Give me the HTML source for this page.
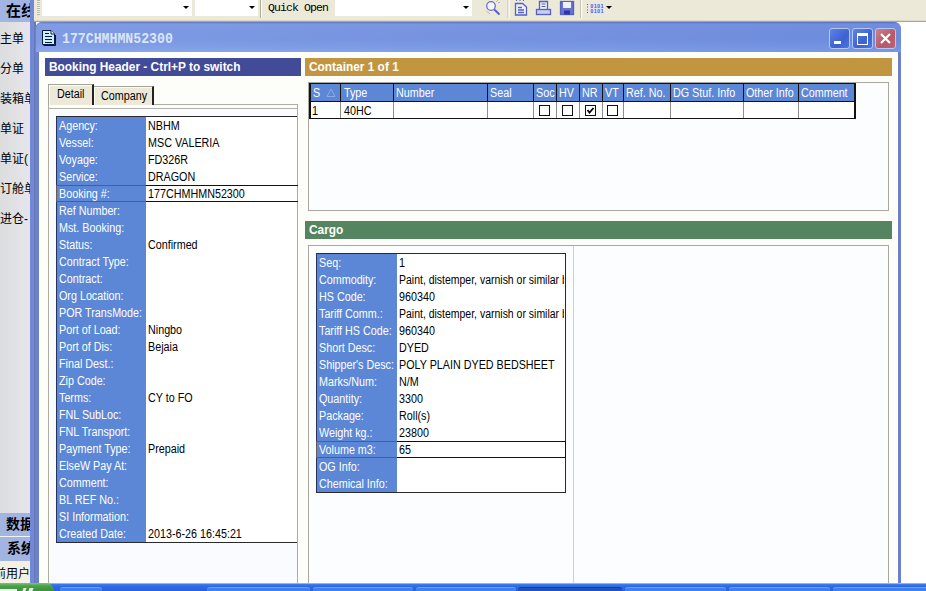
<!DOCTYPE html><html><head><meta charset="utf-8"><title>177CHMHMN52300</title><style>
html,body{margin:0;padding:0}
body{width:926px;height:591px;overflow:hidden;position:relative;background:#fff;font-family:"Liberation Sans",sans-serif;font-size:12.5px;color:#000}
.a{position:absolute}
.t{position:absolute;white-space:nowrap;line-height:17px;height:17px;margin-top:1px;transform-origin:0 50%;transform:scaleX(.86);font-size:12.5px}
.w{color:#fff}
.cj{position:absolute;white-space:nowrap;font-family:"Liberation Sans","Noto Sans CJK SC",sans-serif}
.bar{position:absolute;height:18px;color:#fff;font-weight:bold;font-size:12.5px;line-height:18px}
.bar span{position:absolute;left:4px;top:0;white-space:nowrap;transform-origin:0 50%;transform:scaleX(.95)}
</style></head><body>
<div class="a" style="left:0;top:0;width:926px;height:22px;background:#ece9d8"></div>
<div class="a" style="left:0;top:20px;width:926px;height:1px;background:#dcd9c9"></div><div class="a" style="left:0;top:21px;width:926px;height:1px;background:#a9a699"></div>
<div class="a" style="left:37px;top:0;width:3px;height:15px;background:repeating-linear-gradient(#b9b6a6 0 1px,#f6f4ea 1px 2px)"></div>
<div class="a" style="left:42px;top:0;width:150px;height:16px;background:#fff"></div>
<div class="a" style="left:183px;top:6px;width:0;height:0;border-left:3px solid transparent;border-right:3px solid transparent;border-top:3px solid #000"></div>
<div class="a" style="left:195px;top:0;width:63px;height:16px;background:#fff"></div>
<div class="a" style="left:249px;top:6px;width:0;height:0;border-left:3px solid transparent;border-right:3px solid transparent;border-top:3px solid #000"></div>
<div class="a" style="left:260px;top:0;width:1px;height:18px;background:#b0ad9e"></div><div class="a" style="left:261px;top:0;width:1px;height:18px;background:#fbfaf3"></div>
<div class="a" style="left:268px;top:1px;height:15px;line-height:14px;font-family:'Liberation Mono',monospace;font-size:11.5px;letter-spacing:-0.9px;white-space:nowrap">Quick Open</div>
<div class="a" style="left:335px;top:0;width:137px;height:16px;background:#fff"></div>
<div class="a" style="left:463px;top:6px;width:0;height:0;border-left:3px solid transparent;border-right:3px solid transparent;border-top:3px solid #000"></div>
<svg class="a" style="left:480px;top:0" width="140" height="22" viewBox="480 0 140 22">
<g fill="none" stroke="#5560c0" stroke-width="1.3">
<circle cx="491" cy="6" r="4.3" fill="#f4f5fd" stroke="#6a70d0"/><path d="M494.300 9.500L499.500 14.500" stroke-width="2" stroke="#5a62c8"/><path d="M487 11.500q1.500 2 3.500 2" stroke-width="1" stroke-dasharray="1 1" stroke="#7a80d8"/><path d="M496.500 1.500l1-1M498.500 3l1-1" stroke-width="1" stroke="#7a80d8"/>
<path d="M508 0V18" stroke="#c5c2b2" stroke-width="1"/><path d="M509 0V18" stroke="#fff" stroke-width="1"/>
<path d="M515.500 3.500h7l4 3.500v8h-11z" fill="#eef0fb"/><path d="M518 7.500h4M518 10h6M518 12.500h6" stroke-width="1.300"/><path d="M516 0.500h1M519.500 0.500h1M523 0.500h1" stroke-width="1"/>
<path d="M539.500 9V1.500h8V9" fill="#eef0fb"/><path d="M541.500 4h4M541.500 6.500h4" stroke-width="1"/><rect x="536.500" y="9.500" width="14" height="5" fill="#c9cdf0"/>
<rect x="560.500" y="1.500" width="13" height="13" fill="#6a74d0"/><rect x="563" y="2" width="8" height="6" fill="#eef0fb" stroke="none"/><rect x="564" y="10.500" width="6" height="4" fill="#2a35a8" stroke="none"/>
<path d="M580.500 0V18" stroke="#c5c2b2" stroke-width="1"/><path d="M581.500 0V18" stroke="#fff" stroke-width="1"/>
</g>
<rect x="590" y="4" width="13" height="10" fill="#dfe3fa"/>
<text x="590.500" y="8.200" font-family="Liberation Sans, sans-serif" font-size="5" font-weight="bold" fill="#4a56bc" textLength="13">0101</text>
<text x="590.500" y="13.200" font-family="Liberation Sans, sans-serif" font-size="5" font-weight="bold" fill="#4a56bc" textLength="13">0101</text>
<path d="M587.500 4v1M587.500 6.500v1M587.500 9.500v1M587.500 12v1" stroke="#4a56bc" stroke-width="1"/>
<path d="M606 6h6l-3 3z" fill="#000"/>
</svg>
<div class="a" style="left:0;top:0;width:30px;height:584px;background:linear-gradient(90deg,#dcdddd 0,#e1e1e5 50%,#e6e5ec 100%)"></div>
<div class="a" style="left:0;top:0;width:30px;height:22px;background:#a2b5e2"></div>
<div class="cj" style="left:6px;top:1px;width:24px;overflow:hidden;font-weight:bold;font-size:15px;line-height:20px;height:21px">在线</div>
<div class="cj" style="left:0;top:30px;width:30px;overflow:hidden;font-size:12px;line-height:18px;height:18px">主单</div>
<div class="cj" style="left:0;top:60px;width:30px;overflow:hidden;font-size:12px;line-height:18px;height:18px">分单</div>
<div class="cj" style="left:0;top:90px;width:30px;overflow:hidden;font-size:12px;line-height:18px;height:18px">装箱单</div>
<div class="cj" style="left:0;top:120px;width:30px;overflow:hidden;font-size:12px;line-height:18px;height:18px">单证</div>
<div class="cj" style="left:0;top:150px;width:30px;overflow:hidden;font-size:12px;line-height:18px;height:18px">单证(</div>
<div class="cj" style="left:0;top:180px;width:30px;overflow:hidden;font-size:12px;line-height:18px;height:18px">订舱单</div>
<div class="cj" style="left:0;top:210px;width:30px;overflow:hidden;font-size:12px;line-height:18px;height:18px">进仓-</div>
<div class="a" style="left:0;top:513px;width:30px;height:23px;background:#a2b5e2"></div>
<div class="a" style="left:0;top:536px;width:30px;height:1px;background:#f4f4f8"></div>
<div class="a" style="left:0;top:537px;width:30px;height:24px;background:#a2b5e2"></div>
<div class="cj" style="left:6px;top:513px;width:24px;overflow:hidden;font-weight:bold;font-size:14px;line-height:22px;height:23px">数据</div>
<div class="cj" style="left:7px;top:537px;width:23px;overflow:hidden;font-weight:bold;font-size:14px;line-height:22px;height:23px">系统</div>
<div class="a" style="left:0;top:561px;width:30px;height:23px;background:#f3f1e6"></div>
<div class="cj" style="left:-6px;top:565px;width:36px;overflow:hidden;font-size:12px;line-height:18px;height:18px">前用户</div>
<div class="a" style="left:30px;top:0;width:4px;height:584px;background:#7088d8"></div>
<div class="a" style="left:34px;top:22px;width:2px;height:562px;background:#6a78b8"></div>
<div class="a" style="left:35px;top:22px;width:866px;height:562px;background:#6d80cc;border-radius:7px 7px 0 0"></div>
<div class="a" style="left:36px;top:22px;width:865px;height:30px;border-radius:7px 7px 0 0;background:linear-gradient(180deg,#566db8 0,#6f8ad6 1px,#7c98e2 2.5px,#7a97e1 8px,#7896e1 18px,#7f9fe7 26px,#86a6eb 30px)"></div>
<div class="a" style="left:36px;top:22px;width:865px;height:30px;border-radius:7px 7px 0 0;background:linear-gradient(90deg,rgba(255,255,255,.04) 0,rgba(60,90,200,.18) 100%)"></div>
<div class="a" style="left:39px;top:52px;width:859px;height:532px;background:#fdfdfa"></div>
<svg class="a" style="left:42px;top:30px" width="15" height="17" viewBox="0 0 15 17">
<path d="M1.500 15.500h12v-10.500" fill="none" stroke="#0a1538" stroke-width="1"/>
<path d="M0.500 0.500h8.500l3.500 3.500v10.500h-12z" fill="#cdeefb" stroke="#0c1a40" stroke-width="1"/><path d="M9 0.500v3.500h3.500" fill="#f4fcff" stroke="#0c1a40" stroke-width="1"/>
<path d="M3 3.500h4M3 6.500h7M3 9.500h7M3 12.500h7" stroke="#0c1a40" stroke-width="1"/></svg>
<div class="a" style="left:62px;top:31px;height:18px;line-height:18px;font-family:'Liberation Mono',monospace;font-weight:bold;font-size:13.2px;color:#dbe5fa;white-space:nowrap;transform-origin:0 50%;transform:scaleY(1.13)">177CHMHMN52300</div>
<div class="a" style="left:829px;top:28px;width:19px;height:19px;border:1px solid #b4c6f4;border-radius:3px;background:linear-gradient(135deg,#5f83e4,#3c62d2 60%,#4d74de);box-sizing:content-box"></div>
<div class="a" style="left:834px;top:41px;width:7px;height:3px;background:#fff"></div>
<div class="a" style="left:852px;top:28px;width:19px;height:19px;border:1px solid #b4c6f4;border-radius:3px;background:linear-gradient(135deg,#5f83e4,#3c62d2 60%,#4d74de);box-sizing:content-box"></div>
<div class="a" style="left:857px;top:33px;width:9px;height:8px;border:1px solid #fff;border-top:3px solid #fff;box-sizing:content-box"></div>
<div class="a" style="left:875px;top:28px;width:19px;height:19px;border:1px solid #b4c6f4;border-radius:3px;background:linear-gradient(135deg,#cc808c,#b85868 60%,#c06272);box-sizing:content-box"></div>
<svg class="a" style="left:876px;top:29px" width="19" height="19" viewBox="0 0 19 19"><path d="M5 5l9 9M14 5l-9 9" stroke="#fff" stroke-width="2.200"/></svg>
<div class="bar" style="left:45px;top:58px;width:256px;background:#424b98"><span>Booking Header - Ctrl+P to switch</span></div>
<div class="bar" style="left:305px;top:58px;width:587px;background:#c29640"><span>Container 1 of 1</span></div>
<div class="bar" style="left:305px;top:221px;width:587px;background:#548560"><span>Cargo</span></div>
<div class="a" style="left:48px;top:104px;width:250px;height:480px;border:1px solid #aeada3;border-bottom:none;box-sizing:border-box;background:#fafbfe"></div>
<div class="a" style="left:49px;top:105px;width:248px;height:3px;background:#fdfdfb"></div><div class="a" style="left:49px;top:108px;width:248px;height:1px;background:#b4b3aa"></div>
<div class="a" style="left:94px;top:86px;width:60px;height:19px;background:#ece9d8;border-top:1px solid #a5a499;border-right:2px solid #222;box-shadow:inset 1px 1px 0 #fbfaf4;box-sizing:border-box"></div>
<div class="a" style="left:48px;top:84px;width:46px;height:21px;background:#ece9d8;border-top:1px solid #a5a499;border-left:1px solid #a5a499;border-right:2px solid #222;box-shadow:inset 1px 1px 0 #fbfaf4;box-sizing:border-box"></div>
<div class="t" style="left:57px;top:85px">Detail</div>
<div class="t" style="left:101px;top:87px">Company</div>
<div class="a" style="left:57px;top:117px;width:240px;height:425px;background:#fff;border:1px solid #2a2a2a;border-left-color:#27335f;border-right:none;box-sizing:content-box;margin:-1px 0 0 -1px"></div>
<div class="a" style="left:57px;top:117px;width:89px;height:425px;background:#5b87d6"></div>
<div class="t w" style="left:59px;top:117px">Agency:</div>
<div class="a" style="left:146px;top:117px;width:150px;height:17px;overflow:hidden"><div class="t" style="left:2px;top:0">NBHM</div></div>
<div class="t w" style="left:59px;top:134px">Vessel:</div>
<div class="a" style="left:146px;top:134px;width:150px;height:17px;overflow:hidden"><div class="t" style="left:2px;top:0">MSC VALERIA</div></div>
<div class="t w" style="left:59px;top:151px">Voyage:</div>
<div class="a" style="left:146px;top:151px;width:150px;height:17px;overflow:hidden"><div class="t" style="left:2px;top:0">FD326R</div></div>
<div class="t w" style="left:59px;top:168px">Service:</div>
<div class="a" style="left:146px;top:168px;width:150px;height:17px;overflow:hidden"><div class="t" style="left:2px;top:0">DRAGON</div></div>
<div class="a" style="left:56px;top:185px;width:242px;height:17px;border:1px solid #111;border-right:none;;box-sizing:border-box"></div>
<div class="a" style="left:56px;top:185px;width:90px;height:17px;border:1px solid #6b5a4a;border-right:none;box-sizing:border-box"></div>
<div class="t w" style="left:59px;top:185px">Booking #:</div>
<div class="a" style="left:146px;top:185px;width:150px;height:17px;overflow:hidden"><div class="t" style="left:2px;top:0">177CHMHMN52300</div></div>
<div class="t w" style="left:59px;top:202px">Ref Number:</div>
<div class="t w" style="left:59px;top:219px">Mst. Booking:</div>
<div class="t w" style="left:59px;top:236px">Status:</div>
<div class="a" style="left:146px;top:236px;width:150px;height:17px;overflow:hidden"><div class="t" style="left:2px;top:0">Confirmed</div></div>
<div class="t w" style="left:59px;top:253px">Contract Type:</div>
<div class="t w" style="left:59px;top:270px">Contract:</div>
<div class="t w" style="left:59px;top:287px">Org Location:</div>
<div class="t w" style="left:59px;top:304px">POR TransMode:</div>
<div class="t w" style="left:59px;top:321px">Port of Load:</div>
<div class="a" style="left:146px;top:321px;width:150px;height:17px;overflow:hidden"><div class="t" style="left:2px;top:0">Ningbo</div></div>
<div class="t w" style="left:59px;top:338px">Port of Dis:</div>
<div class="a" style="left:146px;top:338px;width:150px;height:17px;overflow:hidden"><div class="t" style="left:2px;top:0">Bejaia</div></div>
<div class="t w" style="left:59px;top:355px">Final Dest.:</div>
<div class="t w" style="left:59px;top:372px">Zip Code:</div>
<div class="t w" style="left:59px;top:389px">Terms:</div>
<div class="a" style="left:146px;top:389px;width:150px;height:17px;overflow:hidden"><div class="t" style="left:2px;top:0">CY to FO</div></div>
<div class="t w" style="left:59px;top:406px">FNL SubLoc:</div>
<div class="t w" style="left:59px;top:423px">FNL Transport:</div>
<div class="t w" style="left:59px;top:440px">Payment Type:</div>
<div class="a" style="left:146px;top:440px;width:150px;height:17px;overflow:hidden"><div class="t" style="left:2px;top:0">Prepaid</div></div>
<div class="t w" style="left:59px;top:457px">ElseW Pay At:</div>
<div class="t w" style="left:59px;top:474px">Comment:</div>
<div class="t w" style="left:59px;top:491px">BL REF No.:</div>
<div class="t w" style="left:59px;top:508px">SI Information:</div>
<div class="t w" style="left:59px;top:525px">Created Date:</div>
<div class="a" style="left:146px;top:525px;width:150px;height:17px;overflow:hidden"><div class="t" style="left:2px;top:0">2013-6-26 16:45:21</div></div>
<div class="a" style="left:308px;top:82px;width:581px;height:129px;border:1px solid #a9a89e;box-sizing:border-box;background:#fcfdff"></div>
<div class="a" style="left:309px;top:83px;width:547px;height:36px;background:#111"></div>
<div class="a" style="left:311px;top:102px;width:543px;height:16px;background:#fff"></div>
<div class="a" style="left:311px;top:84px;width:29px;height:17px;background:#5b87d6;overflow:hidden"><div class="t w" style="left:2px;top:0">S</div></div>
<div class="a" style="left:341px;top:84px;width:52px;height:17px;background:#5b87d6;overflow:hidden"><div class="t w" style="left:3px;top:0">Type</div></div>
<div class="a" style="left:340px;top:102px;width:1px;height:16px;background:#8e8e8e"></div>
<div class="a" style="left:394px;top:84px;width:93px;height:17px;background:#5b87d6;overflow:hidden"><div class="t w" style="left:2px;top:0">Number</div></div>
<div class="a" style="left:393px;top:102px;width:1px;height:16px;background:#8e8e8e"></div>
<div class="a" style="left:488px;top:84px;width:45px;height:17px;background:#5b87d6;overflow:hidden"><div class="t w" style="left:2px;top:0">Seal</div></div>
<div class="a" style="left:487px;top:102px;width:1px;height:16px;background:#8e8e8e"></div>
<div class="a" style="left:534px;top:84px;width:22px;height:17px;background:#5b87d6;overflow:hidden"><div class="t w" style="left:2px;top:0">Soc</div></div>
<div class="a" style="left:533px;top:102px;width:1px;height:16px;background:#8e8e8e"></div>
<div class="a" style="left:557px;top:84px;width:22px;height:17px;background:#5b87d6;overflow:hidden"><div class="t w" style="left:2px;top:0">HV</div></div>
<div class="a" style="left:556px;top:102px;width:1px;height:16px;background:#8e8e8e"></div>
<div class="a" style="left:580px;top:84px;width:22px;height:17px;background:#5b87d6;overflow:hidden"><div class="t w" style="left:2px;top:0">NR</div></div>
<div class="a" style="left:579px;top:102px;width:1px;height:16px;background:#8e8e8e"></div>
<div class="a" style="left:603px;top:84px;width:20px;height:17px;background:#5b87d6;overflow:hidden"><div class="t w" style="left:2px;top:0">VT</div></div>
<div class="a" style="left:602px;top:102px;width:1px;height:16px;background:#8e8e8e"></div>
<div class="a" style="left:624px;top:84px;width:46px;height:17px;background:#5b87d6;overflow:hidden"><div class="t w" style="left:2px;top:0">Ref. No.</div></div>
<div class="a" style="left:623px;top:102px;width:1px;height:16px;background:#8e8e8e"></div>
<div class="a" style="left:671px;top:84px;width:72px;height:17px;background:#5b87d6;overflow:hidden"><div class="t w" style="left:2px;top:0">DG Stuf. Info</div></div>
<div class="a" style="left:670px;top:102px;width:1px;height:16px;background:#8e8e8e"></div>
<div class="a" style="left:744px;top:84px;width:54px;height:17px;background:#5b87d6;overflow:hidden"><div class="t w" style="left:2px;top:0">Other Info</div></div>
<div class="a" style="left:743px;top:102px;width:1px;height:16px;background:#8e8e8e"></div>
<div class="a" style="left:799px;top:84px;width:55px;height:17px;background:#5b87d6;overflow:hidden"><div class="t w" style="left:2px;top:0">Comment</div></div>
<div class="a" style="left:798px;top:102px;width:1px;height:16px;background:#8e8e8e"></div>
<svg class="a" style="left:326px;top:88px" width="10" height="10" viewBox="0 0 10 10"><path d="M1 8.500h8M1 8.500l4-7.500l4 7.500" fill="none" stroke="#90abe3" stroke-width="1"/></svg>
<div class="t" style="left:312px;top:102px">1</div>
<div class="t" style="left:344px;top:102px">40HC</div>
<div class="a" style="left:539px;top:105px;width:11px;height:11px;border:1px solid #111;box-sizing:border-box;background:#fff"></div>
<div class="a" style="left:562px;top:105px;width:11px;height:11px;border:1px solid #111;box-sizing:border-box;background:#fff"></div>
<div class="a" style="left:585px;top:105px;width:11px;height:11px;border:1px solid #111;box-sizing:border-box;background:#fff"></div>
<svg class="a" style="left:585px;top:105px" width="11" height="11" viewBox="0 0 11 11"><path d="M2.500 5l2 2.500l4-4.500" fill="none" stroke="#000" stroke-width="1.800"/></svg>
<div class="a" style="left:607px;top:105px;width:11px;height:11px;border:1px solid #111;box-sizing:border-box;background:#fff"></div>
<div class="a" style="left:308px;top:245px;width:581px;height:340px;border:1px solid #a9a89e;border-bottom:none;box-sizing:border-box;background:#fcfdff"></div>
<div class="a" style="left:573px;top:246px;width:1px;height:340px;background:#d2cfc4"></div>
<div class="a" style="left:317px;top:254px;width:248px;height:238px;background:#fff;border:1px solid #2a2a2a;border-left-color:#27335f;box-sizing:content-box;margin:-1px 0 0 -1px"></div>
<div class="a" style="left:317px;top:254px;width:80px;height:238px;background:#5b87d6"></div>
<div class="t w" style="left:319px;top:254px">Seq:</div>
<div class="a" style="left:397px;top:254px;width:167px;height:17px;overflow:hidden"><div class="t" style="left:2px;top:0">1</div></div>
<div class="t w" style="left:319px;top:271px">Commodity:</div>
<div class="a" style="left:397px;top:271px;width:167px;height:17px;overflow:hidden"><div class="t" style="left:2px;top:0;transform:scaleX(.838)">Paint, distemper, varnish or similar b</div></div>
<div class="t w" style="left:319px;top:288px">HS Code:</div>
<div class="a" style="left:397px;top:288px;width:167px;height:17px;overflow:hidden"><div class="t" style="left:2px;top:0">960340</div></div>
<div class="t w" style="left:319px;top:305px">Tariff Comm.:</div>
<div class="a" style="left:397px;top:305px;width:167px;height:17px;overflow:hidden"><div class="t" style="left:2px;top:0;transform:scaleX(.838)">Paint, distemper, varnish or similar b</div></div>
<div class="t w" style="left:319px;top:322px">Tariff HS Code:</div>
<div class="a" style="left:397px;top:322px;width:167px;height:17px;overflow:hidden"><div class="t" style="left:2px;top:0">960340</div></div>
<div class="t w" style="left:319px;top:339px">Short Desc:</div>
<div class="a" style="left:397px;top:339px;width:167px;height:17px;overflow:hidden"><div class="t" style="left:2px;top:0">DYED</div></div>
<div class="t w" style="left:319px;top:356px">Shipper's Desc:</div>
<div class="a" style="left:397px;top:356px;width:167px;height:17px;overflow:hidden"><div class="t" style="left:2px;top:0">POLY PLAIN DYED BEDSHEET</div></div>
<div class="t w" style="left:319px;top:373px">Marks/Num:</div>
<div class="a" style="left:397px;top:373px;width:167px;height:17px;overflow:hidden"><div class="t" style="left:2px;top:0">N/M</div></div>
<div class="t w" style="left:319px;top:390px">Quantity:</div>
<div class="a" style="left:397px;top:390px;width:167px;height:17px;overflow:hidden"><div class="t" style="left:2px;top:0">3300</div></div>
<div class="t w" style="left:319px;top:407px">Package:</div>
<div class="a" style="left:397px;top:407px;width:167px;height:17px;overflow:hidden"><div class="t" style="left:2px;top:0">Roll(s)</div></div>
<div class="t w" style="left:319px;top:424px">Weight kg.:</div>
<div class="a" style="left:397px;top:424px;width:167px;height:17px;overflow:hidden"><div class="t" style="left:2px;top:0">23800</div></div>
<div class="a" style="left:316px;top:441px;width:250px;height:17px;border:1px solid #111;;box-sizing:border-box"></div>
<div class="a" style="left:316px;top:441px;width:81px;height:17px;border:1px solid #6b5a4a;border-right:none;box-sizing:border-box"></div>
<div class="t w" style="left:319px;top:441px">Volume m3:</div>
<div class="a" style="left:397px;top:441px;width:167px;height:17px;overflow:hidden"><div class="t" style="left:2px;top:0">65</div></div>
<div class="t w" style="left:319px;top:458px">OG Info:</div>
<div class="t w" style="left:319px;top:475px">Chemical Info:</div>
<div class="a" style="left:0;top:583px;width:926px;height:8px;background:linear-gradient(180deg,#8fb2f4 0,#8fb2f4 1px,#3f7ff0 1px,#2f6be6 3px,#2862de 8px)"></div>
<div class="a" style="left:0;top:583px;width:54px;height:8px;background:linear-gradient(180deg,#7cc47c 0,#48a048 3px,#3a923a 8px);border-radius:0 9px 0 0"></div>
<div class="a" style="left:0;top:589px;width:17px;height:2px;background:#eef4ee"></div>
<div class="a" style="left:23px;top:588px;width:3px;height:3px;background:#e4f0e4;transform:skewX(-20deg)"></div><div class="a" style="left:29px;top:588px;width:4px;height:3px;background:#e4f0e4;transform:skewX(-20deg)"></div>
<div class="a" style="left:60px;top:587px;width:42px;height:6px;background:#3d80f0;border-radius:3px 3px 0 0;border-top:1px solid #62a0f8;box-sizing:border-box"></div>
<div class="a" style="left:207px;top:587px;width:103px;height:6px;background:#3d80f0;border-radius:3px 3px 0 0;border-top:1px solid #62a0f8;box-sizing:border-box"></div>
<div class="a" style="left:313px;top:587px;width:100px;height:6px;background:#3d80f0;border-radius:3px 3px 0 0;border-top:1px solid #62a0f8;box-sizing:border-box"></div>
<div class="a" style="left:416px;top:587px;width:100px;height:6px;background:#3d80f0;border-radius:3px 3px 0 0;border-top:1px solid #62a0f8;box-sizing:border-box"></div>
<div class="a" style="left:518px;top:587px;width:104px;height:6px;background:#1f52bd;border-radius:3px 3px 0 0;border-top:1px solid #173f9a;box-sizing:border-box"></div>
<div class="a" style="left:625px;top:587px;width:101px;height:6px;background:#3d80f0;border-radius:3px 3px 0 0;border-top:1px solid #62a0f8;box-sizing:border-box"></div>
<div class="a" style="left:729px;top:587px;width:101px;height:6px;background:#3d80f0;border-radius:3px 3px 0 0;border-top:1px solid #62a0f8;box-sizing:border-box"></div>
<div class="a" style="left:833px;top:587px;width:97px;height:6px;background:#3d80f0;border-radius:3px 3px 0 0;border-top:1px solid #62a0f8;box-sizing:border-box"></div>
</body></html>
